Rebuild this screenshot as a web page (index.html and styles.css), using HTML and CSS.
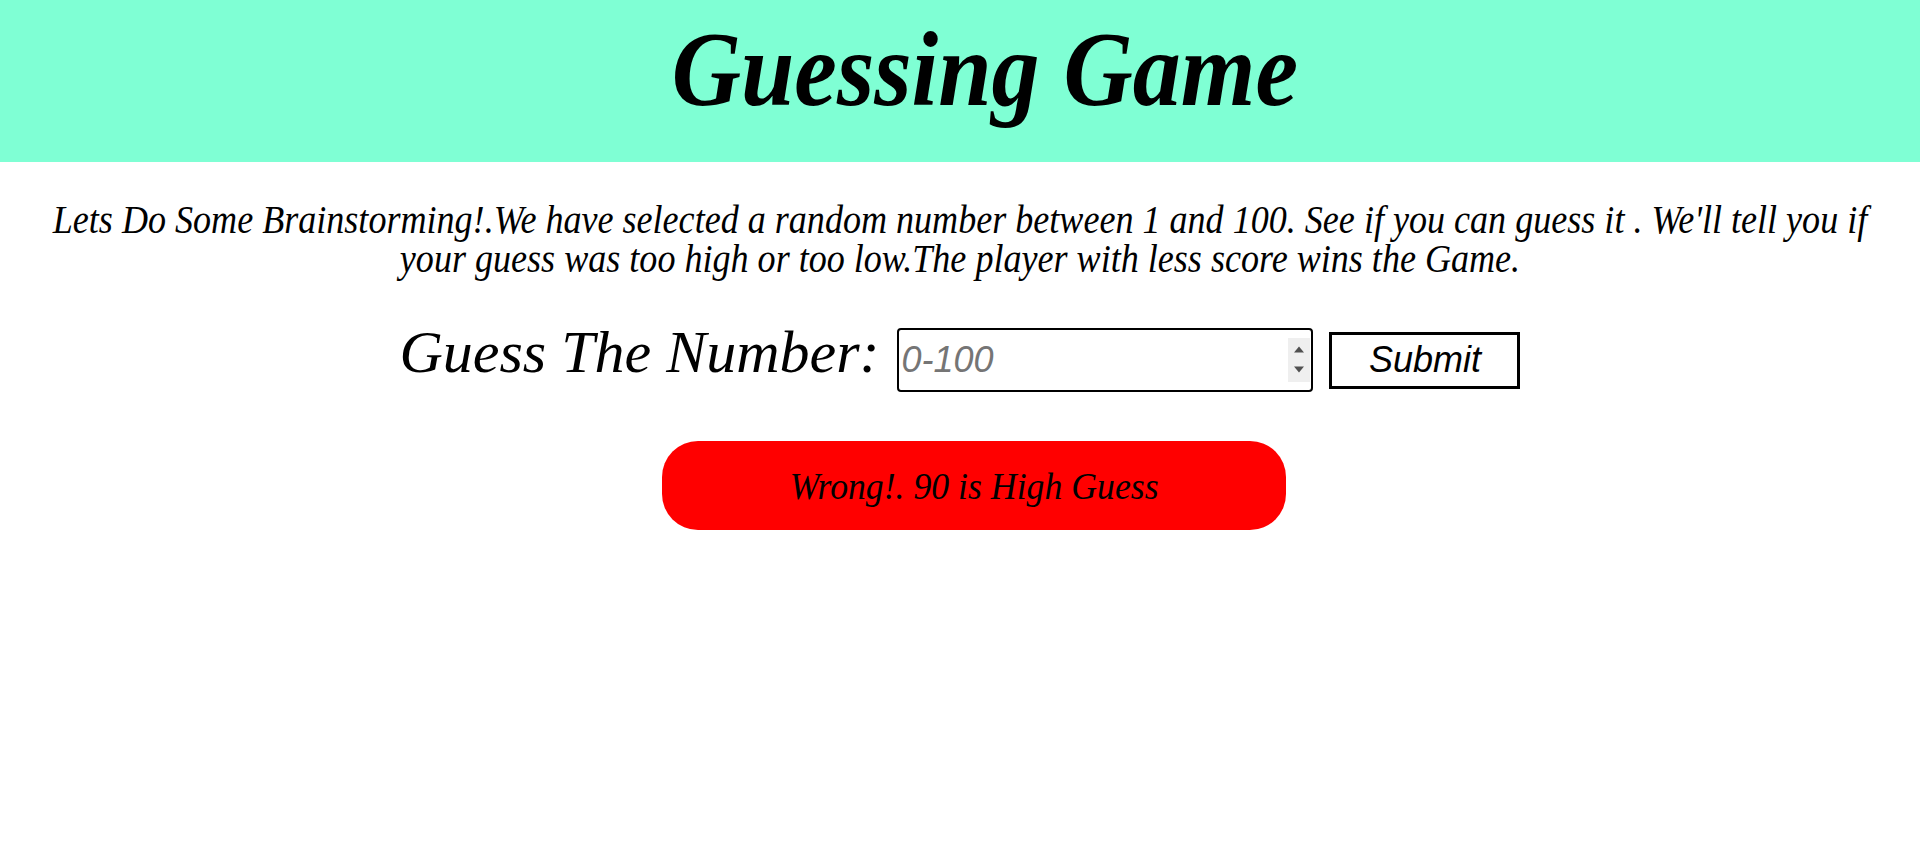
FILE: index.html
```html
<!DOCTYPE html>
<html lang="en">
<head>
<meta charset="utf-8">
<title>Guessing Game</title>
<link rel="stylesheet" href="styles.css">
</head>
<body>
<header class="top">
  <h1 class="title">Guessing Game</h1>
</header>
<div class="intro-wrap">
  <p class="intro">Lets Do Some Brainstorming!.We have selected a random number between 1 and 100. See if you can guess it . We'll tell you if your guess was too high or too low.The player with less score wins the Game.</p>
</div>
<form class="guess-row" onsubmit="return false;">
  <label class="guess-label" for="guess">Guess The Number:</label>
  <span class="input-wrap">
    <input class="guess-input" id="guess" type="number" placeholder="0-100" min="0" max="100">
    <span class="spin" aria-hidden="true">
      <svg width="22" height="44" viewBox="0 0 22 44">
        <polygon points="6,14.5 16,14.5 11,8.5" fill="#505050"/>
        <polygon points="6,28.5 16,28.5 11,34.5" fill="#505050"/>
      </svg>
    </span>
  </span>
  <button class="submit-btn" type="submit">Submit</button>
</form>
<div class="result-wrap">
  <div class="result"><span class="result-text">Wrong!. 90 is High Guess</span></div>
</div>
</body>
</html>
```
FILE: styles.css
```css
html, body {
  margin: 0;
  padding: 0;
  background: #ffffff;
}
body {
  font-family: "Liberation Serif", "Times New Roman", serif;
  color: #000;
}
.top {
  background: #7fffd4;
  height: 162px;
  box-sizing: border-box;
  padding-top: 9px;
}
.title {
  margin: 0;
  padding-left: 55px;
  font-size: 106px;
  font-weight: bold;
  font-style: italic;
  text-align: center;
  line-height: normal;
  transform: scaleX(0.905);
}
.intro-wrap {
  display: flex;
  justify-content: center;
  margin-top: 38px;
}
.intro {
  flex: none;
  width: 2000px;
  margin: 0;
  font-size: 39px;
  line-height: 39px;
  font-style: italic;
  text-align: center;
  transform: scaleX(0.925);
}
.guess-row {
  margin: 40px 0 0;
  display: flex;
  justify-content: center;
  align-items: baseline;
}
.guess-label {
  font-size: 60px;
  font-style: italic;
  margin-right: 18px;
}
.input-wrap {
  position: relative;
  display: inline-block;
}
.guess-input {
  display: block;
  width: 416px;
  height: 64px;
  box-sizing: border-box;
  border: 2px solid #000;
  border-radius: 4px;
  padding: 1px 28px 1px 2px;
  font-family: "Liberation Sans", Arial, sans-serif;
  font-size: 36px;
  font-style: italic;
  outline: none;
  -moz-appearance: textfield;
}
.guess-input::placeholder {
  color: #757575;
}
.guess-input::-webkit-inner-spin-button,
.guess-input::-webkit-outer-spin-button {
  -webkit-appearance: none;
  margin: 0;
}
.spin {
  position: absolute;
  right: 3px;
  top: 10px;
  width: 22px;
  height: 44px;
  background: #efefef;
  display: flex;
}
.submit-btn {
  margin-left: 16px;
  width: 191px;
  height: 57px;
  box-sizing: border-box;
  border: 3px solid #000;
  border-radius: 0;
  background: #fff;
  font-family: "Liberation Sans", Arial, sans-serif;
  font-size: 36px;
  font-style: italic;
  color: #000;
  padding: 1px 6px;
}
.result-wrap {
  margin-top: 49px;
  display: flex;
  justify-content: center;
  padding-left: 28px;
}
.result {
  width: 624px;
  height: 89px;
  box-sizing: border-box;
  background: #ff0000;
  border-radius: 36px;
  display: flex;
  align-items: center;
  justify-content: center;
  font-size: 38px;
  font-style: italic;
}
.result-text {
  display: inline-block;
  transform: scaleX(0.94);
}
```
